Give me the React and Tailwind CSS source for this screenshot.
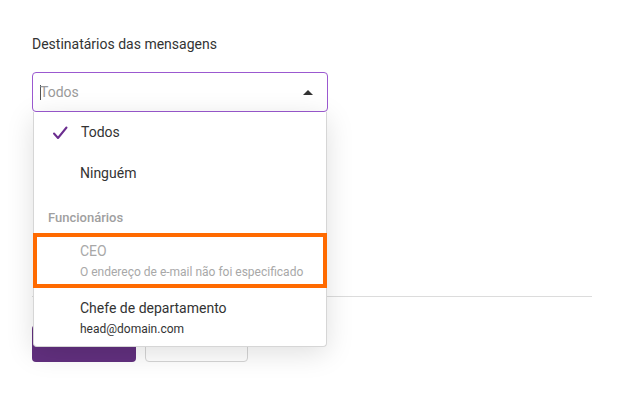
import React from "react";

const FONT = { fontFamily: "Roboto, 'Liberation Sans', sans-serif" };

function Check() {
  return (
    <svg width="16" height="14" viewBox="0 0 16 14" className="shrink-0">
      <polyline points="2,7.5 6,12 14.5,1.5" fill="none" stroke="#6b2d8f" strokeWidth="2" strokeLinecap="round" strokeLinejoin="round" />
    </svg>
  );
}

export default function App() {
  return (
    <div style={FONT} className="w-[624px] h-[393px] bg-white overflow-hidden pl-[32px] pt-[34px]">
      <div className="text-[14px] leading-5 text-[#333]">Destinatários das mensagens</div>

      {/* select with open menu */}
      <div className="relative mt-[18px] w-[296px] z-10">
        <div className="h-[40px] border border-[#9b59d0] rounded-[4px] flex items-center pl-[7px] pr-[14px]">
          <span className="w-px h-[15px] bg-[#555]" />
          <span className="text-[14px] text-[#9a9a9a] -ml-px">Todos</span>
          <span className="ml-auto w-0 h-0 border-l-[5px] border-r-[5px] border-b-[5px] border-l-transparent border-r-transparent border-b-[#333]" />
        </div>

        <div className="absolute top-full left-px right-px bg-white border border-t-0 border-[#d6d6d6] rounded-b-[4px] shadow-[0_6px_28px_rgba(0,0,0,0.13)]">
          <div className="h-[41px] flex items-center pl-[18px] gap-[13px] text-[14px] text-[#333]">
            <Check />
            <span>Todos</span>
          </div>
          <div className="h-[40px] flex items-center pl-[46px] text-[14px] text-[#333]">Ninguém</div>
          <div className="h-[40px] flex items-center pt-[9px] pl-[14px] text-[13px] font-medium text-[#a0a0a0]">Funcionários</div>
          <div className="h-[55px] -mx-px border-[4px] border-[#ff6a00] flex flex-col justify-center pl-[43px] pt-[2px] gap-[1px]">
            <span className="text-[14px] leading-5 text-[#a8a8a8]">CEO</span>
            <span className="text-[12px] leading-5 text-[#a8a8a8]">O endereço de e-mail não foi especificado</span>
          </div>
          <div className="h-[58px] flex flex-col justify-center pl-[46px] pt-[3px] gap-[1px]">
            <span className="text-[14px] leading-5 text-[#333]">Chefe de departamento</span>
            <span className="text-[12px] leading-5 text-[#333]">head@domain.com</span>
          </div>
        </div>
      </div>

      {/* content behind the menu */}
      <div className="mt-[184px] w-[560px] border-t border-[#dcdcdc]" />
      <div className="mt-[28px] flex gap-[9px]">
        <button className="w-[104px] h-[37px] rounded-[4px] bg-[#62307f] text-white text-[14px] pb-[6px]">Salvar</button>
        <button className="w-[103px] h-[37px] rounded-[4px] border border-[#d6d6d6] bg-white text-[#999] text-[14px] pb-[6px]">Cancelar</button>
      </div>
    </div>
  );
}
